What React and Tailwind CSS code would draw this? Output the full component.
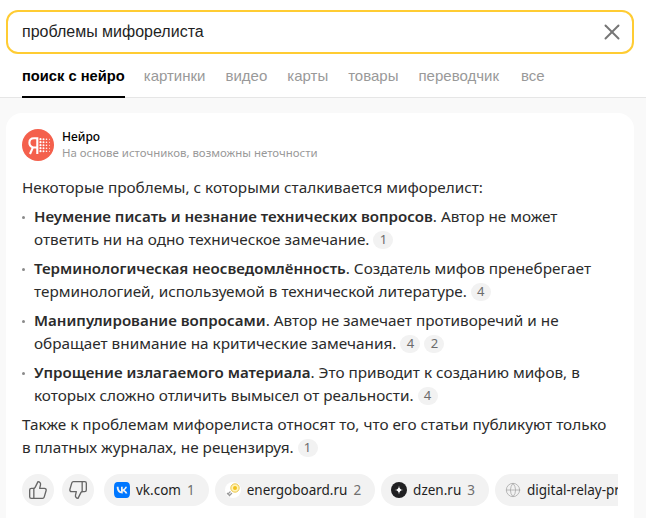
import { ThumbsUp, ThumbsDown, Globe, X } from 'lucide-react';
import { SiVk } from 'react-icons/si';

const tabs = ['картинки', 'видео', 'карты', 'товары', 'переводчик', 'все'];

const Ref = ({ n }) => (
  <span className="inline-flex items-center justify-center h-[18px] min-w-[20px] px-1.5 ml-1 rounded-full bg-[#f2f2f2] text-[13px] text-[#6b6b6b] align-[1px] leading-none">
    {n}
  </span>
);

const items = [
  {
    b: 'Неумение писать и незнание технических вопросов',
    t: '. Автор не может ответить ни на одно техническое замечание.',
    refs: [1],
  },
  {
    b: 'Терминологическая неосведомлённость',
    t: '. Создатель мифов пренебрегает терминологией, используемой в технической литературе.',
    refs: [4],
  },
  {
    b: 'Манипулирование вопросами',
    t: '. Автор не замечает противоречий и не обращает внимание на критические замечания.',
    refs: [4, 2],
  },
  {
    b: 'Упрощение излагаемого материала',
    t: '. Это приводит к созданию мифов, в которых сложно отличить вымысел от реальности.',
    refs: [4],
  },
];

const dotSizes = [1.1, 1, 0.8, 0.5];

const NeuroLogo = () => (
  <svg width="32" height="32" viewBox="0 0 32 32" className="shrink-0">
    <circle cx="16" cy="16" r="16" fill="#f4604c" />
    <path
      d="M15.3 25V9.3H12C9 9.3 7.4 11.3 7.4 13.8c0 2.4 1.4 4 3.5 4.6L8 25M15.3 18.5h-3.8"
      fill="none"
      stroke="#fff"
      strokeWidth="2.1"
    />
    {[0, 1, 2, 3, 4].map((r) =>
      dotSizes.map((size, c) => (
        <circle key={`${r}-${c}`} cx={18.5 + c * 3} cy={10.2 + r * 3} r={size} fill="#fff" />
      ))
    )}
  </svg>
);

const Source = ({ icon, name, n, className = '' }) => (
  <div className={`flex items-center h-8 pl-2.5 pr-3.5 rounded-full bg-[#f2f2f2] shrink-0 text-[13.5px] text-[#1f1f1f] whitespace-nowrap ${className}`}>
    {icon}
    <span className="ml-1.5">{name}</span>
    {n && <span className="ml-1.5 text-[#6f6f6f]">{n}</span>}
  </div>
);

export default function App() {
  return (
    <div className="w-[646px] h-[518px] overflow-hidden bg-white" style={{ fontFamily: '"Noto Sans", sans-serif' }}>
      <div className="h-[98px] border-b border-[#e6e6e6] pl-1.5 pr-3 pt-2.5 font-['Liberation_Sans',sans-serif]">
        <div className="flex items-center justify-between h-[44px] w-full border-2 border-[#fc3] rounded-xl pl-3.5 pr-[7px]">
          <span className="text-base text-[#1f1f1f]">проблемы мифорелиста</span>
          <X size={26} strokeWidth={1.8} className="text-[#767676]" />
        </div>
        <div className="flex gap-[20px] pl-4 mt-3 text-[15px] leading-[20px] text-[#999]">
          <div className="h-[32px] -mr-px border-b-2 border-black text-[14.7px] font-bold text-black">поиск с нейро</div>
          {tabs.map((t) => (
            <div key={t} className="last:ml-0.5">{t}</div>
          ))}
        </div>
      </div>

      <div className="bg-[#f9f9f9] pl-1.5 pr-3 pt-[15px] h-[420px]">
        <div className="bg-white rounded-t-2xl px-4 pt-4 h-[405px] text-[15.3px] leading-[23px] text-[#2b2b2b]">
          <div className="flex items-center gap-2">
            <NeuroLogo />
            <div>
              <div className="text-xs leading-4 font-medium text-black">Нейро</div>
              <div className="text-[11.45px] leading-4 text-[#999]">На основе источников, возможны неточности</div>
            </div>
          </div>

          <p className="mt-[15px]">Некоторые проблемы, с которыми сталкивается мифорелист:</p>

          <ul className="mt-1.5 space-y-1.5">
            {items.map((item) => (
              <li key={item.b} className="relative pl-3">
                <span className="absolute left-0 top-[11px] w-[3px] h-[3px] rounded-full bg-[#8a8a8a]" />
                <b className="font-semibold text-[15.1px]">{item.b}</b>
                {item.t}
                {item.refs.map((r, i) => (
                  <Ref key={i} n={r} />
                ))}
              </li>
            ))}
          </ul>

          <p className="mt-1.5">
            Также к проблемам мифорелиста относят то, что его статьи публикуют только в платных журналах, не рецензируя.
            <Ref n={1} />
          </p>

          <div className="flex items-center gap-1.5 mt-[15px] w-[596px] overflow-hidden">
            <div className="flex items-center justify-center w-8 h-8 rounded-full bg-[#f2f2f2] shrink-0">
              <ThumbsUp size={20} strokeWidth={1.6} className="text-[#666]" />
            </div>
            <div className="flex items-center justify-center w-8 h-8 ml-0.5 rounded-full bg-[#f2f2f2] shrink-0">
              <ThumbsDown size={20} strokeWidth={1.6} className="text-[#666]" />
            </div>
            <Source name="vk.com" n="1" className="ml-1" icon={<SiVk size={16} className="text-[#07f]" />} />
            <Source
              name="energoboard.ru"
              n="2"
              icon={
                <svg width="16" height="16" viewBox="0 0 16 16">
                  <circle cx="8" cy="8" r="8" fill="#fff" />
                  <path d="M2.5 12.5l3-3M4 14l3-3M2 11l3 3" stroke="#999" strokeWidth="1.1" fill="none" />
                  <circle cx="10" cy="6" r="4.2" fill="#fff3b8" stroke="#e5b92a" strokeWidth="0.8" />
                  <circle cx="10" cy="6" r="2" fill="#f2c21c" />
                </svg>
              }
            />
            <Source
              name="dzen.ru"
              n="3"
              icon={
                <svg width="16" height="16" viewBox="0 0 16 16">
                  <circle cx="8" cy="8" r="8" fill="#202022" />
                  <path d="M8 3.5C8.2 6.6 9.4 7.8 12.5 8 9.4 8.2 8.2 9.4 8 12.5 7.8 9.4 6.6 8.2 3.5 8 6.6 7.8 7.8 6.6 8 3.5z" fill="#fff" />
                </svg>
              }
            />
            <Source name="digital-relay-protection.ru" icon={<Globe size={16} strokeWidth={1.2} className="text-[#a8a8a8]" />} />
          </div>
        </div>
      </div>
    </div>
  );
}
